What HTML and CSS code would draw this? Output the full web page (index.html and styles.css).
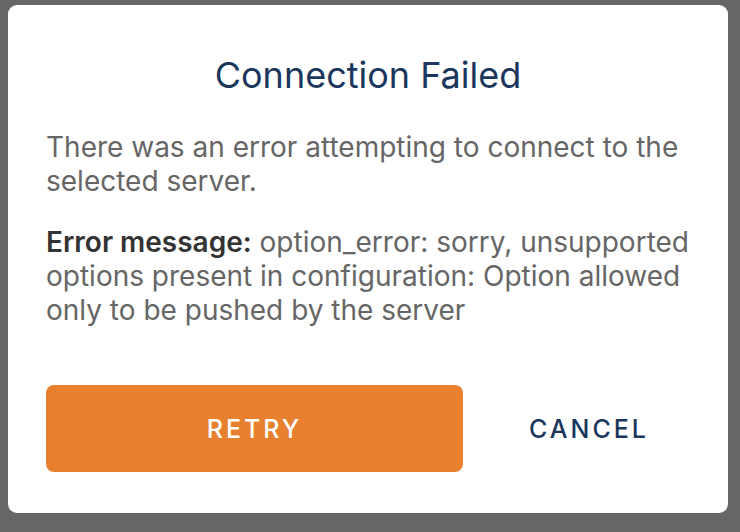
FILE: index.html
```html
<!DOCTYPE html>
<html lang="en">
<head>
    <meta charset="UTF-8">
    <meta name="viewport" content="width=device-width, initial-scale=1.0">
    <title>Connection Failed</title>
    <link rel="stylesheet" href="styles.css">
</head>
<body>
    <div class="dialog">
        <h2 class="dialog-title">Connection Failed</h2>
        <p class="dialog-text">There was an error attempting to connect to the selected server.</p>
        <p class="dialog-text"><strong>Error message:</strong> option_error: sorry, unsupported options present in configuration: Option allowed only to be pushed by the server</p>
        <div class="dialog-actions">
            <button class="btn-retry">RETRY</button>
            <button class="btn-cancel">CANCEL</button>
        </div>
    </div>
</body>
</html>
```

FILE: styles.css
```css
body {
    margin: 0;
    height: 532px;
    background-color: #666666;
    font-family: 'Inter', 'Noto Sans', sans-serif;
    padding: 5px 12px 0 8px;
    box-sizing: border-box;
}
.dialog {
    background: white;
    border-radius: 9px;
    height: 508px;
    padding: 0 30px 0 38px;
    box-sizing: border-box;
    overflow: hidden;
}
.dialog-title {
    margin: 0 8px 0 0;
    padding-top: 48px;
    text-align: center;
    font-size: 36px;
    font-weight: 400;
    line-height: 44px;
    color: #1b365d;
}
.dialog-text {
    margin: 0;
    font-size: 28px;
    line-height: 34px;
    color: #666666;
}
.dialog-title + .dialog-text {
    margin-top: 33px;
}
.dialog-text + .dialog-text {
    margin-top: 27px;
}
.dialog-text strong {
    color: #333333;
    font-weight: 600;
}
.dialog-actions {
    display: flex;
    align-items: center;
    margin-top: 58px;
}
.dialog-actions button {
    font-family: inherit;
    font-size: 25px;
    font-weight: 500;
    letter-spacing: 3px;
    border: none;
    cursor: pointer;
}
.btn-retry {
    width: 417px;
    height: 87px;
    background-color: #e8812f;
    color: white;
    border-radius: 8px;
}
.btn-cancel {
    flex-grow: 1;
    height: 87px;
    margin: 0 8px 0 25px;
    background: transparent;
    color: #1b365d;
}
```
